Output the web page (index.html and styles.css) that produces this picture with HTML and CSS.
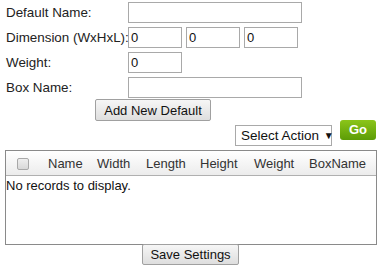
FILE: index.html
```html
<!DOCTYPE html>
<html>
<head>
<meta charset="utf-8">
<link rel="stylesheet" href="styles.css">
</head>
<body>
<div class="page">
  <div class="form">
    <div class="row"><label class="lbl">Default Name:</label><input class="txt wide" type="text"></div>
    <div class="row"><label class="lbl">Dimension (WxHxL):</label><input class="txt small" type="text" value="0"><input class="txt small" type="text" value="0"><input class="txt small" type="text" value="0"></div>
    <div class="row"><label class="lbl">Weight:</label><input class="txt small" type="text" value="0"></div>
    <div class="row"><label class="lbl">Box Name:</label><input class="txt wide" type="text"></div>
  </div>
  <div class="addrow"><button class="btn">Add New Default</button></div>
  <div class="actions">
    <div class="select">Select Action <span class="arrow">▼</span></div>
    <div class="go">Go</div>
  </div>
  <div class="grid">
    <div class="head">
      <span class="cb"></span>
      <span class="h h-name">Name</span>
      <span class="h h-width">Width</span>
      <span class="h h-length">Length</span>
      <span class="h h-height">Height</span>
      <span class="h h-weight">Weight</span>
      <span class="h h-box">BoxName</span>
    </div>
    <div class="empty">No records to display.</div>
  </div>
  <div class="saverow"><button class="btn">Save Settings</button></div>
</div>
</body>
</html>
```
FILE: styles.css
```css
* { box-sizing: border-box; }
html, body { margin: 0; padding: 0; background: #fff; }
body { font-family: "Liberation Sans", Arial, sans-serif; font-size: 13px; color: #222; }
.page { width: 384px; padding: 2px 0 0 5px; }
.form { display: flex; flex-direction: column; gap: 4px; }
.row { display: flex; align-items: center; height: 21px; }
.lbl { width: 123px; padding-left: 1px; white-space: nowrap; font-size: 13.4px; }
.txt {
  height: 21px; border: 1px solid #a9a9a9; padding: 0 2px; margin: 0 4px 0 0;
  font-family: "Liberation Sans", Arial, sans-serif; font-size: 13px; color: #111; background: #fff;
}
.wide { width: 174px; }
.small { width: 54px; }
.addrow { display: flex; padding-left: 90px; margin-top: 1px; }
.btn {
  font-family: "Liberation Sans", Arial, sans-serif; font-size: 13px; color: #111;
  border: 1px solid #a0a0a0; border-radius: 2px;
  background: linear-gradient(#f6f6f6, #dedede);
  height: 22px; padding: 0 7px; margin: 0;
}
.addrow .btn { width: 116px; }
.actions { display: flex; justify-content: flex-end; align-items: flex-start; padding-right: 8px; height: 29px; }
.select {
  width: 97px; height: 21px; border: 1px solid #a9a9a9; margin-top: 4px; margin-right: 8px;
  padding: 2px 0 0 5px; font-size: 13.5px; white-space: nowrap; color: #111;
}
.arrow { font-size: 10px; position: relative; top: -1px; margin-left: 1px; }
.go {
  width: 36px; height: 20px; border-radius: 3px; margin-top: -1px;
  background: linear-gradient(#8bc51a, #5c9c06);
  color: #fff; font-weight: bold; font-size: 13px; text-align: center; line-height: 20px;
}
.grid { width: 372px; height: 95px; border: 1px solid #8a8a8a; }
.head {
  position: relative; height: 25px; border-bottom: 1px solid #b0b0b0;
  background: linear-gradient(#ffffff, #ececec);
  font-size: 13px; color: #333;
}
.cb {
  position: absolute; left: 11px; top: 7px; width: 12px; height: 12px;
  border: 1px solid #a8a8a8; border-radius: 2px; background: linear-gradient(#eee, #d8d8d8);
}
.h { position: absolute; top: 5px; }
.h-name { left: 42px; }
.h-width { left: 91px; }
.h-length { left: 140px; }
.h-height { left: 194px; }
.h-weight { left: 248px; }
.h-box { left: 303px; }
.empty { padding: 2px 0 0 0; font-size: 13px; color: #111; }
.saverow { display: flex; padding-left: 137px; margin-top: -1px; }
.saverow .btn { width: 97px; height: 21px; padding: 0; }
```
